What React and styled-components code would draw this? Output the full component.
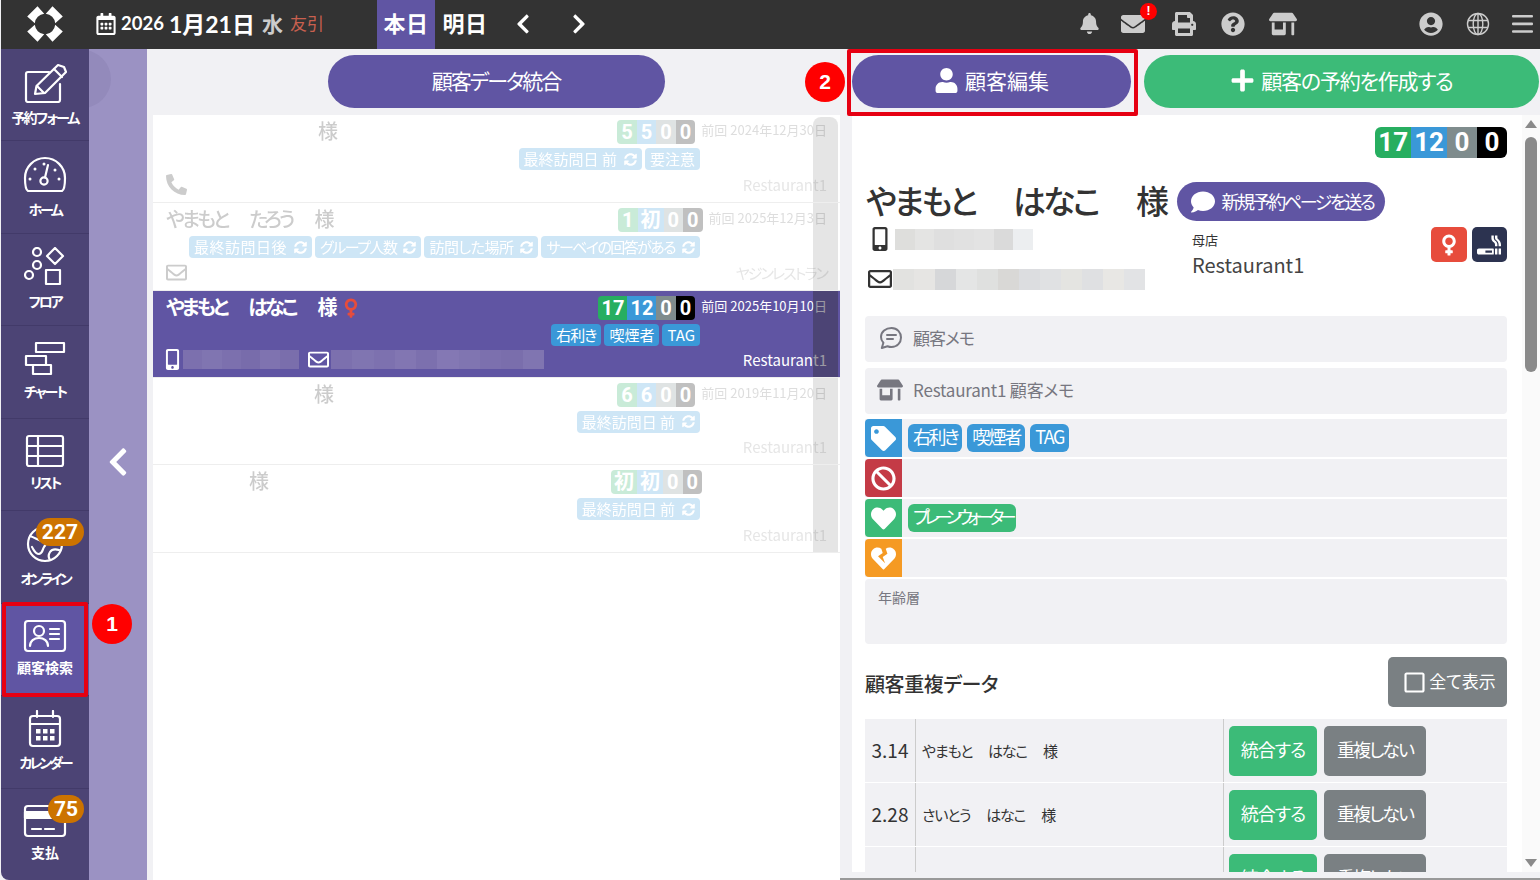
import React from 'react';
import styled, { createGlobalStyle } from 'styled-components';
import {
  FaBell, FaEnvelope, FaPrint, FaQuestionCircle, FaStoreAlt, FaUserCircle, FaChevronLeft, FaChevronRight,
  FaRegCalendarAlt, FaRegEnvelope, FaMobileAlt, FaPhoneAlt, FaSyncAlt, FaVenus, FaSmoking, FaUser, FaPlus,
  FaComment, FaTag, FaBan, FaHeart, FaHeartBroken, FaRegSquare,
} from 'react-icons/fa';

const PURPLE = '#6055a3';
const GREEN = '#3cbb78';
const BLUE = '#3a98d8';
const JP = '"Noto Sans CJK JP", "Noto Sans", sans-serif';

const GlobalStyle = createGlobalStyle`
  html, body { margin: 0; padding: 0; height: 880px; overflow: hidden; }
  body { font-family: ${JP}; font-feature-settings: "palt"; color: #333; background: #f1f1f4; }
  * { box-sizing: border-box; }
`;

// Layout

const Page = styled.div`
  position: relative;
  width: 1540px;
  height: 880px;
  overflow: hidden;
  display: flex;
  flex-direction: column;
  background: #f1f1f4;
  padding-left: 1px;
`;

const Body = styled.div`
  flex: 1;
  display: flex;
  min-height: 0;
`;

// Top bar

const TopBar = styled.header`
  height: 49px;
  flex: none;
  background: #333;
  display: flex;
  align-items: center;
  color: #fff;
`;

const LogoBox = styled.div`
  width: 88px;
  display: flex;
  justify-content: center;
  padding-bottom: 1px;
`;

const DateBlock = styled.div`
  width: 288px;
  display: flex;
  align-items: center;
  padding: 0 0 4px 6px;
  font-family: Lato, ${JP};
  font-weight: 700;
  white-space: nowrap;
  svg { font-size: 22px; margin-right: 4px; margin-top: 2px; }
`;

const Year = styled.span`
  font-size: 18.500px;
  margin-right: 5px;
`;

const MonthDay = styled.span`
  font-size: 23px;
  font-weight: 700;
  margin-right: 7px;
`;

const Weekday = styled.span`
  font-size: 21px;
  color: #ccc;
  margin-right: 7px;
`;

const Rokuyo = styled.span`
  font-family: ${JP};
  font-size: 17px;
  font-weight: 400;
  color: #c9604f;
`;

const DayTab = styled.div`
  height: 49px;
  width: ${p => (p.$active ? 58 : 60)}px;
  background: ${p => (p.$active ? PURPLE : 'transparent')};
  display: flex;
  align-items: center;
  justify-content: center;
  font-size: 22px;
  font-weight: 700;
  letter-spacing: 0.5px;
  padding-bottom: 5px;
`;

const NavArrows = styled.div`
  display: flex;
  align-items: center;
  gap: 34px;
  margin-left: 17px;
  padding-bottom: 2px;
  font-size: 22px;
`;

const TopIcons = styled.div`
  margin-left: auto;
  display: flex;
  align-items: center;
  color: #ccc;
  padding-bottom: 2px;
`;

const TopIcon = styled.span`
  position: relative;
  display: flex;
  justify-content: center;
  width: ${p => p.$w || 48}px;
  font-size: ${p => p.$size || 24}px;
`;

const AlertDot = styled.span`
  position: absolute;
  top: -9px;
  right: 1px;
  width: 17px;
  height: 17px;
  border-radius: 50%;
  background: #f00;
  color: #fff;
  font: 700 12px/17px "Liberation Sans", sans-serif;
  text-align: center;
`;

const TopRight = styled.div`
  display: flex;
  align-items: center;
  margin-left: 100px;
`;

// Sidebar

const Sidebar = styled.nav`
  width: 88px;
  flex: none;
  background: #4c4475;
  border-bottom-left-radius: 8px;
  display: flex;
  flex-direction: column;
`;

const SideItem = styled.div`
  position: relative;
  flex: 1;
  display: flex;
  flex-direction: column;
  align-items: center;
  justify-content: center;
  gap: 5px;
  padding-bottom: 3px;
  color: #fff;
  background: ${p => (p.$active ? PURPLE : 'transparent')};
  border-bottom: 1px solid #423a69;
  &:last-child { border-bottom: 0; }
  svg { display: block; }
`;

const SideLabel = styled.span`
  font-size: 14px;
  font-weight: 700;
  line-height: 18px;
  white-space: nowrap;
  letter-spacing: ${p => p.$ls || 0}px;
`;

const CountBubble = styled.span`
  position: absolute;
  top: ${p => p.$top}px;
  right: ${p => p.$right}px;
  height: 28px;
  padding: 0 6px;
  border-radius: 14px;
  background: #cc7300;
  color: #fff;
  font: 700 21px/28px Roboto, sans-serif;
`;

const Strip = styled.div`
  position: relative;
  width: 58px;
  flex: none;
  background: #9b92c3;
  display: flex;
  align-items: center;
  justify-content: center;
  color: #fff;
  font-size: 32px;
  padding-bottom: 6px;
  overflow: hidden;
  &::before {
    content: '';
    position: absolute;
    left: -36px;
    top: 1px;
    width: 58px;
    height: 58px;
    border-radius: 50%;
    background: rgba(76, 68, 117, 0.1);
  }
`;

// Columns

const LeftCol = styled.section`
  width: 693px;
  flex: none;
  padding-left: 6px;
  display: flex;
  flex-direction: column;
`;

const RightCol = styled.section`
  flex: 1;
  min-width: 0;
  display: flex;
  flex-direction: column;
  padding-left: 12px;
  border-bottom: 2px solid #999;
`;

const ActionBar = styled.div`
  height: 66px;
  flex: none;
  display: flex;
  align-items: center;
  justify-content: ${p => (p.$center ? 'center' : 'flex-start')};
  gap: 13px;
  padding-bottom: 2px;
`;

const PillButton = styled.div`
  width: ${p => p.$w}px;
  height: 53px;
  border-radius: 27px;
  background: ${p => p.$bg};
  color: #fff;
  font-size: 21px;
  letter-spacing: ${p => p.$ls || 0}px;
  display: flex;
  align-items: center;
  justify-content: center;
  gap: 6px;
  padding-bottom: 3px;
  margin-left: ${p => p.$ml || 0}px;
  svg { font-size: 25px; margin-top: 2px; }
`;

// Customer names: the wide space between family name, given name and 様 is a bit wider than the font's

const NamePart = styled.span`
  margin-right: var(--name-gap, 0);
  &:last-child { margin-right: 0; }
`;

const NameText = styled.span`
  white-space: pre;
`;

const SpacedName = ({ text }) => {
  const parts = text.split('　');
  return (
    <NameText>
      {parts.map((part, i) => (
        <NamePart key={i}>{i < parts.length - 1 ? `${part}　` : part}</NamePart>
      ))}
    </NameText>
  );
};

// Customer list

const List = styled.div`
  flex: 1;
  background: #fff;
`;

const Row = styled.div`
  position: relative;
  height: ${p => p.$h}px;
  border-bottom: 1px solid #eee;
  background: ${p => (p.$selected ? PURPLE : '#fff')};
  color: ${p => (p.$selected ? '#fff' : '#333')};
`;

const RowShade = styled.div`
  position: absolute;
  top: ${p => p.$top || 0}px;
  bottom: 0;
  right: 2px;
  width: 25px;
  background: ${p => (p.$selected ? 'rgba(56, 51, 71, 0.5)' : 'rgba(0, 0, 0, 0.1)')};
  border-radius: ${p => (p.$top ? '8px 8px 0 0' : '0')};
`;

const RowBody = styled.div`
  height: 100%;
  padding: 5px 13px 3px;
  opacity: ${p => (p.$selected ? 1 : 0.25)};
  display: flex;
  flex-direction: column;
`;

const RowTop = styled.div`
  display: flex;
  align-items: flex-start;
  height: 25px;
`;

const RowName = styled.div`
  --name-gap: 5px;
  flex: 1;
  margin-top: -1px;
  font-size: 20px;
  line-height: 24px;
  font-weight: ${p => (p.$selected ? 700 : 500)};
  letter-spacing: -3px;
  padding-left: ${p => p.$indent || 0}px;
  display: flex;
  align-items: center;
  gap: 6px;
  svg { color: #e74c3c; font-size: 22px; margin-top: 1px; }
`;

const Counts = styled.div`
  display: flex;
  border-radius: ${p => (p.$large ? 6 : 4)}px;
  overflow: hidden;
  height: ${p => (p.$large ? 31 : 24)}px;
  font: 700 ${p => (p.$large ? 26 : 20)}px/${p => (p.$large ? 31 : 24)}px Roboto, ${JP};
  color: #fff;
`;

const CountCell = styled.span`
  background: ${p => p.$bg};
  padding: 0 3px;
  min-width: ${p => (p.$large ? 30 : 19.500)}px;
  text-align: center;
`;

const LastVisit = styled.div`
  width: ${p => (p.$empty ? '119px' : 'auto')};
  margin-left: 6px;
  font-size: 13px;
  line-height: 20px;
  color: ${p => (p.$selected ? '#fff' : '#777')};
`;

const RowTags = styled.div`
  display: flex;
  justify-content: flex-end;
  gap: 3px;
  margin-top: 3px;
  padding-right: 127px;
`;

const Tag = styled.span`
  height: 22px;
  padding: 0 5px;
  border-radius: 4px;
  background: ${BLUE};
  color: #fff;
  font-size: 15px;
  line-height: 20px;
  letter-spacing: ${p => p.$ls || 0}px;
  display: flex;
  align-items: center;
  gap: 7px;
  white-space: nowrap;
  svg { font-size: 13px; }
`;

const RowBottom = styled.div`
  margin-top: auto;
  height: 29px;
  display: flex;
  align-items: center;
  font-size: 21px;
  svg { flex: none; }
`;

const PhoneGlyph = styled.span`
  display: flex;
  margin-left: -4px;
`;

const ShopName = styled.span`
  margin-left: auto;
  font-size: 15px;
  letter-spacing: ${p => p.$ls || 0}px;
  color: ${p => (p.$selected ? '#fff' : '#999')};
`;

const Mosaic = styled.div`
  display: flex;
  width: ${p => p.$w}px;
  height: ${p => p.$h}px;
  margin: 0 ${p => p.$mr || 0}px 0 ${p => p.$ml || 0}px;
`;

const MosaicTile = styled.span`
  flex: 1;
  background: ${p => p.$c};
`;

// Customer detail

const DetailWrap = styled.div`
  height: 757px;
  display: flex;
`;

const Detail = styled.div`
  width: 670px;
  height: 757px;
  overflow: hidden;
  background: #fff;
  padding: 12px 15px 0 13px;
`;

const Scrollbar = styled.div`
  flex: 1;
  background: #fafafa;
  display: flex;
  flex-direction: column;
  align-items: center;
  padding: 5px 0;
`;

const ScrollArrow = styled.span`
  width: 0;
  height: 0;
  border-left: 6px solid transparent;
  border-right: 6px solid transparent;
  ${p => (p.$down ? 'border-top: 8px solid #8a8a8a;' : 'border-bottom: 8px solid #8a8a8a;')}
  ${p => (p.$down ? 'margin-top: auto;' : '')}
`;

const ScrollThumb = styled.span`
  width: 12px;
  height: 235px;
  margin-top: 9px;
  border-radius: 6px;
  background: #8a8a8a;
`;

const CountLine = styled.div`
  display: flex;
  justify-content: flex-end;
  height: 31px;
`;

const NameLine = styled.div`
  display: flex;
  align-items: center;
  height: 39px;
  margin-top: 24px;
`;

const BigName = styled.h1`
  --name-gap: 8px;
  width: 311px;
  margin: 0 0 0 1px;
  font-size: 33px;
  font-weight: 500;
  line-height: 39px;
  letter-spacing: -3px;
  color: #333;
  padding-bottom: 2px;
`;

const SendButton = styled.div`
  height: 39px;
  width: 208px;
  border-radius: 20px;
  background: ${PURPLE};
  color: #fff;
  font-size: 18px;
  letter-spacing: -2.400px;
  display: flex;
  align-items: center;
  justify-content: center;
  gap: 6px;
  padding: 0 0 2px 3px;
  svg { font-size: 24px; margin-top: 2px; }
`;

const Profile = styled.div`
  display: flex;
  margin-top: 6px;
  height: 89px;
`;

const ContactCol = styled.div`
  width: 327px;
  display: flex;
  flex-direction: column;
`;

const ContactLine = styled.div`
  display: flex;
  align-items: center;
  height: 24px;
  margin-bottom: ${p => p.$mb || 0}px;
  padding-left: ${p => p.$pl || 0}px;
  color: #333;
`;

const ShopCol = styled.div`
  flex: 1;
  padding-top: 5px;
`;

const ShopLabel = styled.div`
  font-size: 13px;
  line-height: 16px;
`;

const ShopValue = styled.div`
  margin-top: 4px;
  font-size: 20px;
  line-height: 26px;
  color: #444;
`;

const AttrIcon = styled.span`
  width: 35.500px;
  height: 35px;
  margin-left: 5px;
  border-radius: 5px;
  background: ${p => p.$bg};
  color: #fff;
  font-size: 24px;
  display: flex;
  align-items: center;
  justify-content: center;
`;

const MemoBox = styled.div`
  height: 46px;
  margin-bottom: ${p => p.$mb || 5}px;
  border-radius: 4px;
  background: #f1f1f4;
  color: #777780;
  font-size: 17px;
  letter-spacing: ${p => p.$ls || 0}px;
  display: flex;
  align-items: center;
  gap: 10px;
  padding-left: ${p => p.$pl}px;
  padding-bottom: 4px;
  svg { flex: none; font-size: ${p => p.$icon}px; margin-top: 2px; }
`;

const TagRow = styled.div`
  height: 38px;
  margin-bottom: 2px;
  background: #f1f1f4;
  display: flex;
  align-items: center;
  gap: 5px;
`;

const TagRowIcon = styled.span`
  width: 37px;
  height: 38px;
  margin-right: 1px;
  border-radius: 4px 0 0 4px;
  background: ${p => p.$bg};
  color: #fff;
  font-size: 25px;
  display: flex;
  align-items: center;
  justify-content: center;
`;

const BigTag = styled.span`
  height: 28px;
  padding: 0 5px;
  border-radius: 6px;
  background: ${p => p.$bg};
  color: #fff;
  font-size: 18px;
  line-height: 25px;
  letter-spacing: ${p => p.$ls || 0}px;
  white-space: nowrap;
`;

const AgeBox = styled.div`
  height: 65px;
  border-radius: 4px;
  background: #f1f1f4;
  color: #777780;
  font-size: 14px;
  padding: 8px 13px;
`;

const DupHead = styled.div`
  display: flex;
  align-items: center;
  justify-content: space-between;
  margin: 13px 0 12px;
`;

const DupTitle = styled.h2`
  margin: 3px 0 0;
  font-size: 20px;
  font-weight: 500;
  letter-spacing: -0.400px;
  color: #333;
`;

const ShowAll = styled.div`
  width: 119px;
  height: 50px;
  border-radius: 5px;
  background: #7a8083;
  color: #fff;
  font-size: 17px;
  display: flex;
  align-items: center;
  justify-content: center;
  gap: 3px;
  padding: 0 0 3px 4px;
  svg { font-size: 23px; margin-top: 3px; }
`;

const DupRow = styled.div`
  display: grid;
  grid-template-columns: 50px 308px 1fr;
  height: 63px;
  margin-bottom: 1px;
  background: #f1f1f4;
`;

const DupScore = styled.div`
  display: flex;
  align-items: center;
  justify-content: center;
  font-size: 19px;
  color: #333;
  padding-bottom: 3px;
`;

const DupName = styled.div`
  --name-gap: 2px;
  display: flex;
  align-items: center;
  padding: 0 0 1px 6px;
  font-size: 15px;
  letter-spacing: -1.200px;
  border-left: 1px solid #ccc;
`;

const DupActions = styled.div`
  display: flex;
  align-items: center;
  gap: 7px;
  padding-left: 5px;
  border-left: 1px solid #ccc;
`;

const DupButton = styled.div`
  width: ${p => p.$w}px;
  height: 50px;
  border-radius: 5px;
  background: ${p => p.$bg};
  color: #fff;
  font-size: 18px;
  letter-spacing: ${p => p.$ls}px;
  display: flex;
  align-items: center;
  justify-content: center;
  padding-bottom: 4px;
`;

// Annotations lying over the page

const RedFrame = styled.div`
  position: absolute;
  left: ${p => p.$x}px;
  top: ${p => p.$y}px;
  width: ${p => p.$w}px;
  height: ${p => p.$h}px;
  border: 4px solid #e60012;
  border-radius: 2px;
`;

const RedDot = styled.div`
  position: absolute;
  left: ${p => p.$x}px;
  top: ${p => p.$y}px;
  width: 40px;
  height: 40px;
  border-radius: 50%;
  background: #f00;
  color: #fff;
  font: 700 21px/40px "Liberation Sans", sans-serif;
  text-align: center;
`;

// Drawn icons

const Line = ({ w = 46, h = 42, children }) => (
  <svg width={w} height={h} viewBox={`0 0 ${w} ${h}`} fill="none" stroke="currentColor" strokeWidth="2.2" strokeLinecap="round" strokeLinejoin="round">
    {children}
  </svg>
);

const Logo = () => (
  <svg width="38" height="38" viewBox="-19 -19 38 38" fill="#fff">
    {[0, 90, 180, 270].map(r => (
      <path key={r} transform={`rotate(${r})`} d="M0.800 -10.200L7.500 -17.800L17.800 -7.500L10.200 -0.800A10.500 10.500 0 0 0 0.800 -10.200Z" />
    ))}
  </svg>
);

const GlobeLine = () => (
  <svg width="24" height="24" viewBox="0 0 24 24" fill="none" stroke="currentColor" strokeWidth="1.4">
    <circle cx="12" cy="12" r="10.500" />
    <ellipse cx="12" cy="12" rx="4.800" ry="10.500" />
    <path d="M2 8.500h20M2 15.500h20M12 1.500v21" />
  </svg>
);

const Bars = () => (
  <svg width="21" height="18" viewBox="0 0 21 18" fill="currentColor">
    <rect y="0" width="21" height="2.600" rx="1" />
    <rect y="7.600" width="21" height="2.600" rx="1" />
    <rect y="15.200" width="21" height="2.600" rx="1" />
  </svg>
);

const MemoBubble = () => (
  <svg width="24" height="24" viewBox="0 0 24 24" fill="none" stroke="currentColor" strokeWidth="2" strokeLinecap="round" strokeLinejoin="round">
    <path d="M12.500 2C6.700 2 2 5.900 2 11c0 2.200 .9 4.200 2.400 5.700L2.800 22l5.700-1.800c1.300 .5 2.600 .8 4 .8 5.800 0 9.500-4.400 9.500-9.500S18.300 2 12.500 2z" />
    <path d="M8 9h9M8 13h6" />
  </svg>
);

const EditIcon = () => (
  <Line>
    <g transform="translate(0 2)">
      <path d="M27 9H6a2 2 0 0 0-2 2v26a2 2 0 0 0 2 2h30a2 2 0 0 0 2-2V21" />
      <path d="M13 31l1.500-8L36 2l6 2 2 5-21 21z" />
      <path d="M32 6l8 8M15 23l7 7" />
    </g>
  </Line>
);

const GaugeIcon = () => (
  <Line>
    <g transform="translate(0 2)">
      <path d="M6 36c-2-1-3-6-3-13a20 20 0 0 1 40 0c0 7-1 12-3 13z" />
      <circle cx="22" cy="26" r="3.600" />
      <path d="M23 22.500L26 10" />
      <g fill="currentColor" stroke="none">
        <circle cx="8" cy="24" r="1.500" /><circle cx="13" cy="14" r="1.500" /><circle cx="22" cy="9" r="1.500" /><circle cx="33" cy="15" r="1.500" /><circle cx="37" cy="24" r="1.500" />
      </g>
    </g>
  </Line>
);

const FloorIcon = () => (
  <Line h={40} w={42}>
    <circle cx="13" cy="5" r="4" />
    <circle cx="13" cy="18" r="4" />
    <circle cx="5" cy="28" r="4" />
    <path d="M31 1l8 8-8 8-8-8z" />
    <rect x="22" y="23" width="14" height="14" />
  </Line>
);

const ChartIcon = () => (
  <Line w={42} h={36}>
    <rect x="12" y="2" width="28" height="9" />
    <rect x="2" y="15" width="20" height="9" />
    <rect x="9" y="24" width="18" height="9" />
  </Line>
);

const TableIcon = () => (
  <Line w={40} h={34}>
    <rect x="2" y="2" width="36" height="30" rx="2" />
    <path d="M2 12h36M2 22h36M13 2v30" />
  </Line>
);

const GlobeIcon = () => (
  <Line w={40} h={40}>
    <circle cx="20" cy="20" r="17" />
    <path d="M5 12c6 2 9 5 13 5 3 0 3 4 1 6-2 3-1 6-5 7-4 0-5-4-7-7M34 26c-3-1-7-1-9 2s-2 5 0 8" />
  </Line>
);

const CardIcon = () => (
  <Line w={44} h={34}>
    <rect x="2" y="2" width="40" height="30" rx="3" />
    <circle cx="16" cy="12" r="5" />
    <path d="M7 27c0-5 4-8 9-8s9 3 9 8M27 10h9M27 15h9M27 20h9" />
  </Line>
);

const CalendarIcon = () => (
  <Line w={36} h={38}>
    <rect x="3" y="6" width="30" height="30" rx="3" />
    <path d="M3 14h30M10 1v6M26 1v6" />
    <g fill="currentColor" stroke="none">
      <rect x="9" y="19" width="4.500" height="4.500" /><rect x="16" y="19" width="4.500" height="4.500" /><rect x="23" y="19" width="4.500" height="4.500" />
      <rect x="9" y="26" width="4.500" height="4.500" /><rect x="16" y="26" width="4.500" height="4.500" /><rect x="23" y="26" width="4.500" height="4.500" />
    </g>
  </Line>
);

const PayIcon = () => (
  <Line w={44} h={34}>
    <rect x="2" y="2" width="40" height="30" rx="3" />
    <path d="M2 8h40v6H2z" fill="currentColor" />
    <path d="M9 25h9M22 25h9" />
  </Line>
);

// Data

const sideItems = [
  { label: '予約フォーム', icon: <EditIcon />, ls: -1.800 },
  { label: 'ホーム', icon: <GaugeIcon />, ls: -2.300 },
  { label: 'フロア', icon: <FloorIcon />, ls: -2.300 },
  { label: 'チャート', icon: <ChartIcon />, ls: -2 },
  { label: 'リスト', icon: <TableIcon />, ls: -2.300 },
  { label: 'オンライン', icon: <GlobeIcon />, ls: -3, count: '227', top: 7, right: 5 },
  { label: '顧客検索', icon: <CardIcon />, active: true },
  { label: 'カレンダー', icon: <CalendarIcon />, ls: -3 },
  { label: '支払', icon: <PayIcon />, count: '75', top: 6, right: 5 },
];

const customers = [
  { name: '様', indent: 152, h: 88, counts: ['5', '5', '0', '0'], date: '前回 2024年12月30日', tags: [{ text: '最終訪問日 前', sync: true }, { text: '要注意' }], contact: 'phone', shop: 'Restaurant1', first: true },
  {
    name: 'やまもと　たろう　様',
    h: 88,
    counts: ['1', '初', '0', '0'],
    date: '前回 2025年12月3日',
    tags: [
      { text: '最終訪問日後', sync: true, ls: 0.500 },
      { text: 'グループ人数', sync: true, ls: -1.500 },
      { text: '訪問した場所', sync: true, ls: -0.500 },
      { text: 'サーベイの回答がある', sync: true, ls: -1.600 },
    ],
    contact: 'mail',
    shop: 'ヤジンレストラン',
    shopLs: -1.900,
  },
  { name: 'やまもと　はなこ　様', h: 87, counts: ['17', '12', '0', '0'], date: '前回 2025年10月10日', tags: [{ text: '右利き', ls: -1 }, { text: '喫煙者' }, { text: 'TAG' }], contact: 'both', shop: 'Restaurant1', selected: true },
  { name: '様', indent: 148, h: 87, counts: ['6', '6', '0', '0'], date: '前回 2019年11月20日', tags: [{ text: '最終訪問日 前', sync: true }], shop: 'Restaurant1' },
  { name: '様', indent: 83, h: 88, counts: ['初', '初', '0', '0'], tags: [{ text: '最終訪問日 前', sync: true }], shop: 'Restaurant1' },
];

const countColors = ['#27ae60', BLUE, '#7f8c8d', '#000'];

const rowMosaicA = ['#7c70ae', '#8075b1', '#7c70ae', '#786cab', '#7f73b0', '#7a6eac'];
const rowMosaicB = ['#7c70ae', '#8075b1', '#7d71af', '#8276b2', '#7c70ae', '#8478b4', '#8075b1', '#7c70ae', '#7a6eac', '#8075b1'];
const phoneMosaic = ['#dededc', '#e4e4e3', '#dfdfdf', '#e1e1e1', '#e3e3e3', '#dadada', '#eceef0'];
const mailMosaic = ['#e2e2e0', '#e6e5e3', '#d6d7d9', '#e4e5e5', '#dfe0df', '#d9d8d6', '#dcdde0', '#e0e1e3', '#e4e4e1', '#dfe0e2', '#e8e7e4', '#e2e3e5'];

const tile = colors => colors.map((c, i) => <MosaicTile key={i} $c={c} />);

const CountGroup = ({ values, large }) => (
  <Counts $large={large}>
    {values.map((v, i) => (
      <CountCell key={i} $large={large} $bg={countColors[i]}>{v}</CountCell>
    ))}
  </Counts>
);

const CustomerRow = ({ c }) => (
  <Row $h={c.h} $selected={c.selected}>
    <RowBody $selected={c.selected}>
      <RowTop>
        <RowName $indent={c.indent} $selected={c.selected}>
          <SpacedName text={c.name} />
          {c.selected && <FaVenus />}
        </RowName>
        <CountGroup values={c.counts} />
        <LastVisit $selected={c.selected} $empty={!c.date}>{c.date}</LastVisit>
      </RowTop>
      <RowTags>
        {c.tags.map(t => (
          <Tag key={t.text} $ls={t.ls}>{t.text}{t.sync && <FaSyncAlt />}</Tag>
        ))}
      </RowTags>
      <RowBottom>
        {c.contact === 'phone' && <FaPhoneAlt />}
        {c.contact === 'mail' && <FaRegEnvelope />}
        {c.contact === 'both' && (
          <>
            <PhoneGlyph><FaMobileAlt /></PhoneGlyph>
            <Mosaic $w={116} $h={19} $mr={9}>{tile(rowMosaicA)}</Mosaic>
            <FaRegEnvelope />
            <Mosaic $w={213} $h={19} $ml={2}>{tile(rowMosaicB)}</Mosaic>
          </>
        )}
        <ShopName $selected={c.selected} $ls={c.shopLs}>{c.shop}</ShopName>
      </RowBottom>
    </RowBody>
    <RowShade $selected={c.selected} $top={c.first ? 2 : 0} />
  </Row>
);

const DuplicateRow = ({ score, name }) => (
  <DupRow>
    <DupScore>{score}</DupScore>
    <DupName><SpacedName text={name} /></DupName>
    <DupActions>
      <DupButton $w={88} $bg={GREEN} $ls={-1}>統合する</DupButton>
      <DupButton $w={102} $bg="#7a8083" $ls={-2}>重複しない</DupButton>
    </DupActions>
  </DupRow>
);

const App = () => (
  <Page>
    <GlobalStyle />
    <TopBar>
      <LogoBox><Logo /></LogoBox>
      <DateBlock>
        <FaRegCalendarAlt />
        <Year>2026</Year>
        <MonthDay>1月21日</MonthDay>
        <Weekday>水</Weekday>
        <Rokuyo>友引</Rokuyo>
      </DateBlock>
      <DayTab $active>本日</DayTab>
      <DayTab>明日</DayTab>
      <NavArrows>
        <FaChevronLeft />
        <FaChevronRight />
      </NavArrows>
      <TopIcons>
        <TopIcon $size={21} $w={38}><FaBell /></TopIcon>
        <TopIcon $size={24} $w={50}><FaEnvelope /><AlertDot>!</AlertDot></TopIcon>
        <TopIcon $size={24} $w={52}><FaPrint /></TopIcon>
        <TopIcon $size={24} $w={46}><FaQuestionCircle /></TopIcon>
        <TopIcon $size={28} $w={54}><FaStoreAlt /></TopIcon>
        <TopRight>
          <TopIcon $size={24} $w={42}><FaUserCircle /></TopIcon>
          <TopIcon $w={52}><GlobeLine /></TopIcon>
          <TopIcon $w={36}><Bars /></TopIcon>
        </TopRight>
      </TopIcons>
    </TopBar>

    <Body>
      <Sidebar>
        {sideItems.map(item => (
          <SideItem key={item.label} $active={item.active}>
            {item.icon}
            <SideLabel $ls={item.ls}>{item.label}</SideLabel>
            {item.count && <CountBubble $top={item.top} $right={item.right}>{item.count}</CountBubble>}
          </SideItem>
        ))}
      </Sidebar>
      <Strip><FaChevronLeft /></Strip>

      <LeftCol>
        <ActionBar $center>
          <PillButton $w={337} $bg={PURPLE} $ml={-1} $ls={-2}>顧客データ統合</PillButton>
        </ActionBar>
        <List>
          {customers.map((c, i) => <CustomerRow key={i} c={c} />)}
        </List>
      </LeftCol>

      <RightCol>
        <ActionBar>
          <PillButton $w={279} $bg={PURPLE}><FaUser />顧客編集</PillButton>
          <PillButton $w={395} $bg={GREEN} $ls={-1.200}><FaPlus />顧客の予約を作成する</PillButton>
        </ActionBar>
        <DetailWrap>
          <Detail>
            <CountLine><CountGroup large values={['17', '12', '0', '0']} /></CountLine>
            <NameLine>
              <BigName><SpacedName text="やまもと　はなこ　様" /></BigName>
              <SendButton><FaComment />新規予約ページを送る</SendButton>
            </NameLine>
            <Profile>
              <ContactCol>
                <ContactLine $mb={16} $pl={3}>
                  <FaMobileAlt size={24} />
                  <Mosaic $w={138} $h={21} $ml={3}>{tile(phoneMosaic)}</Mosaic>
                </ContactLine>
                <ContactLine $pl={3}>
                  <FaRegEnvelope size={24} />
                  <Mosaic $w={252} $h={21} $ml={1}>{tile(mailMosaic)}</Mosaic>
                </ContactLine>
              </ContactCol>
              <ShopCol>
                <ShopLabel>母店</ShopLabel>
                <ShopValue>Restaurant1</ShopValue>
              </ShopCol>
              <AttrIcon $bg="#e74c3c"><FaVenus /></AttrIcon>
              <AttrIcon $bg="#2c3350"><FaSmoking /></AttrIcon>
            </Profile>
            <MemoBox $pl={14} $icon={24} $ls={-1} $mb={6}>
              <MemoBubble /><span>顧客メモ</span>
            </MemoBox>
            <MemoBox $pl={12} $icon={26} $ls={-0.200}>
              <FaStoreAlt /><span>Restaurant1 顧客メモ</span>
            </MemoBox>
            <TagRow>
              <TagRowIcon $bg={BLUE}><FaTag /></TagRowIcon>
              <BigTag $bg={BLUE} $ls={-2.500}>右利き</BigTag>
              <BigTag $bg={BLUE} $ls={-2}>喫煙者</BigTag>
              <BigTag $bg={BLUE} $ls={-1.500}>TAG</BigTag>
            </TagRow>
            <TagRow><TagRowIcon $bg="#c43b46"><FaBan /></TagRowIcon></TagRow>
            <TagRow>
              <TagRowIcon $bg={GREEN}><FaHeart /></TagRowIcon>
              <BigTag $bg={GREEN} $ls={-5.400}>プレーンウォーター</BigTag>
            </TagRow>
            <TagRow><TagRowIcon $bg="#f59a23"><FaHeartBroken /></TagRowIcon></TagRow>
            <AgeBox>年齢層</AgeBox>
            <DupHead>
              <DupTitle>顧客重複データ</DupTitle>
              <ShowAll><FaRegSquare />全て表示</ShowAll>
            </DupHead>
            <DuplicateRow score="3.14" name="やまもと　はなこ　様" />
            <DuplicateRow score="2.28" name="さいとう　はなこ　様" />
            <DuplicateRow score="2.14" name="やまもと　たろう　様" />
          </Detail>
          <Scrollbar>
            <ScrollArrow />
            <ScrollThumb />
            <ScrollArrow $down />
          </Scrollbar>
        </DetailWrap>
      </RightCol>
    </Body>

    <RedFrame $x={2} $y={602} $w={86} $h={95} />
    <RedFrame $x={847} $y={49} $w={291} $h={67} />
    <RedDot $x={92} $y={604}>1</RedDot>
    <RedDot $x={805} $y={62}>2</RedDot>
  </Page>
);

export default App;
